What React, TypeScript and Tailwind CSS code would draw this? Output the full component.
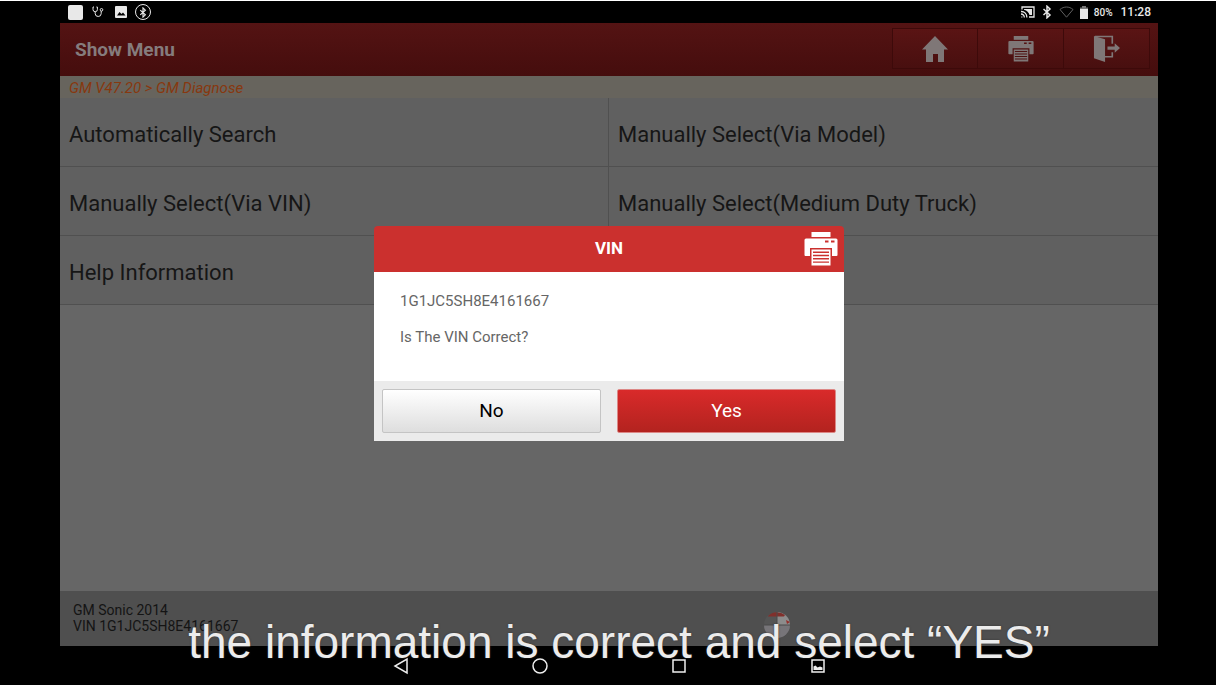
import type { ReactNode } from "react";

const MENU_ITEMS = [
  "Automatically Search",
  "Manually Select(Via Model)",
  "Manually Select(Via VIN)",
  "Manually Select(Medium Duty Truck)",
  "Help Information",
];

function PrinterIcon({ className }: { className?: string }) {
  return (
    <svg className={className} viewBox="0 0 34 34" fill="currentColor" aria-hidden="true">
      <path d="M7.5 0h19v5h-19z" />
      <path
        fillRule="evenodd"
        d="M2 6.500h30A1.500 1.500 0 0 1 33.500 8v15a1 1 0 0 1-1 1H28v-8H6v8H1.500a1 1 0 0 1-1-1V8A1.500 1.500 0 0 1 2 6.500zM21 8.500v2h3.500v-2zM27 8.500v2h3.500v-2z"
      />
      <path
        fillRule="evenodd"
        d="M7.500 17.500h19v16h-19zM9 19.500v1.400h16v-1.400zM9 22.800v1.400h16v-1.400zM9 26.100v1.400h16v-1.400zM9 29.400v1.400h16v-1.400z"
      />
    </svg>
  );
}

function HomeIcon() {
  return (
    <svg className="size-[26px]" viewBox="0 0 26 26" fill="currentColor" aria-hidden="true">
      <path d="M13 0 26 13.500h-4V26h-6v-8h-5v8H4V13.500H0z" />
    </svg>
  );
}

function ExitIcon() {
  return (
    <svg className="size-[27px]" viewBox="0 0 28 28" fill="currentColor" aria-hidden="true">
      <path d="M1 1 12.500 4.500V28L1 24z" />
      <path d="M2 1.500h18V9M12 22.500h8V18" fill="none" stroke="currentColor" strokeWidth="1.700" />
      <path d="M15 11.800h7.500V8.500l5.500 5-5.500 5v-3.300H15z" />
    </svg>
  );
}

function PictureIcon() {
  return (
    <svg className="h-3 w-3" viewBox="0 0 12 12" aria-hidden="true">
      <rect width="12" height="12" rx="1" fill="#e8e8e8" />
      <path d="M2 9.500 4.500 6l2 2L8 6.500l2.500 3z" fill="#000" />
    </svg>
  );
}

function BluetoothIcon({ className }: { className?: string }) {
  return (
    <svg className={className} viewBox="0 0 10 14" fill="none" stroke="currentColor" strokeWidth="1.500" aria-hidden="true">
      <path d="M1.500 4 8 10 5 12.800V1.200L8 4 1.500 10" />
    </svg>
  );
}

function StatusBar() {
  return (
    <div className="flex h-[22px] items-center justify-between pl-2 pr-[7px] text-[#e8e8e8]">
      <div className="flex items-center">
        <span className="size-[15px] rounded-xs bg-[#e8e8e8]" />
        <svg className="ml-[9px] h-3 w-3" viewBox="0 0 12 12" fill="none" stroke="currentColor" aria-hidden="true">
          <path d="M2 1H1v2.500a2.200 2.200 0 0 0 4.400 0V1h-1M3.200 6v1.500a3 3 0 0 0 6 0V5" />
          <circle cx="9.500" cy="3.800" r="1.300" />
        </svg>
        <span className="ml-[11px]">
          <PictureIcon />
        </span>
        <span className="ml-2 flex size-4 items-center justify-center rounded-full border border-[#e8e8e8]">
          <BluetoothIcon className="h-[11px] w-2" />
        </span>
      </div>
      <div className="flex items-center">
        <svg className="h-3 w-[14px]" viewBox="0 0 14 12" fill="none" stroke="currentColor" strokeWidth="1.300" aria-hidden="true">
          <path d="M1 3.500V1h12v10H8" />
          <path d="M3 3h8v6H8.500Q7.500 5 3 3.800z" fill="currentColor" stroke="none" />
          <path d="M0 5.500A5.500 5.500 0 0 1 5.800 11.500M0 8a3.300 3.300 0 0 1 3.300 3.500M.5 11h.8" />
        </svg>
        <BluetoothIcon className="ml-[7px] h-[14px] w-[10px]" />
        <svg className="ml-[7px] h-3 w-[15px] text-[#606060]" viewBox="0 0 15 12" fill="none" stroke="currentColor" aria-hidden="true">
          <path d="M1 3.500C4.800.2 10.200.2 14 3.500L7.500 11.200z" />
        </svg>
        <svg className="ml-[6px] h-[13px] w-[8px]" viewBox="0 0 8 13" aria-hidden="true">
          <path d="M2 0h4v1.500h2V4H0V1.500h2z" fill="#777" />
          <path d="M0 3h8v10H0z" fill="currentColor" />
        </svg>
        <span className="ml-[6px] text-[10px] font-medium">80%</span>
        <span className="ml-2 text-xs font-medium">11:28</span>
      </div>
    </div>
  );
}

function ToolbarButton({ label, children }: { label: string; children: ReactNode }) {
  return (
    <button
      type="button"
      aria-label={label}
      className="flex h-[41px] w-[86px] items-center justify-center border-y border-r border-[#3d0a0a] bg-linear-to-b from-[#5a1414] to-[#480f0f] text-[#7f7777] first:border-l"
    >
      {children}
    </button>
  );
}

function VinDialog() {
  return (
    <div
      role="dialog"
      aria-labelledby="vin-title"
      className="w-[470px] overflow-hidden rounded-t-sm bg-[#cb302e]"
    >
      <div className="relative flex h-[46px] items-center justify-center text-white">
        <h2 id="vin-title" className="text-[17px] font-bold">VIN</h2>
        <button type="button" aria-label="Print" className="absolute right-[6px] top-[6px]">
          <PrinterIcon className="size-[34px]" />
        </button>
      </div>
      <div className="space-y-3 bg-white px-[26px] pb-8 pt-[17px] text-[15px] leading-6 text-[#666]">
        <p>1G1JC5SH8E4161667</p>
        <p>Is The VIN Correct?</p>
      </div>
      <div className="flex gap-4 bg-[#ebebeb] p-2 text-[19px]">
        <button
          type="button"
          className="h-11 flex-1 rounded-xs border border-[#c4c4c4] bg-linear-to-b from-white to-[#dedede] text-black"
        >
          No
        </button>
        <button
          type="button"
          className="h-11 flex-1 rounded-xs border border-[#dc8886] bg-linear-to-b from-[#d92a2a] to-[#b3231f] text-white"
        >
          Yes
        </button>
      </div>
    </div>
  );
}

function NavBar() {
  return (
    <nav className="flex h-[39px] items-center justify-center gap-[119px] pt-px text-[#eee]">
      <button type="button" aria-label="Back">
        <svg className="size-5" viewBox="0 0 20 20" fill="none" stroke="currentColor" strokeWidth="1.500" aria-hidden="true">
          <path d="M16 3v14L4 10z" />
        </svg>
      </button>
      <button type="button" aria-label="Home">
        <svg className="size-5" viewBox="0 0 20 20" fill="none" stroke="currentColor" strokeWidth="1.500" aria-hidden="true">
          <circle cx="10" cy="10" r="7" />
        </svg>
      </button>
      <button type="button" aria-label="Recent apps">
        <svg className="size-5" viewBox="0 0 20 20" fill="none" stroke="currentColor" strokeWidth="1.500" aria-hidden="true">
          <path d="M4 4h12v12H4z" />
        </svg>
      </button>
      <button type="button" aria-label="Screenshot">
        <svg className="size-5" viewBox="0 0 20 20" fill="none" stroke="currentColor" strokeWidth="1.500" aria-hidden="true">
          <path d="M4 4h12v12H4z" />
          <path d="M5.500 14v-3.500l2-1 2 2 2.500-1 2.500 1V14z" fill="currentColor" stroke="none" />
        </svg>
      </button>
    </nav>
  );
}

export default function App() {
  return (
    <div className="relative flex min-h-screen flex-col border-t border-white bg-black pl-[60px] pr-[58px] font-[Roboto,sans-serif]">
      <StatusBar />

      <div className="relative flex flex-1 flex-col bg-[#666]">
        <header className="flex h-[53px] items-start justify-between bg-linear-to-b from-[#541313] to-[#450d0d] pr-2 pt-[5px]">
          <h1 className="pl-[15px] pt-2 text-[19px] font-bold leading-7 text-[#857c7d]">Show Menu</h1>
          <div className="flex">
            <ToolbarButton label="Home"><HomeIcon /></ToolbarButton>
            <ToolbarButton label="Print"><PrinterIcon className="size-[26px]" /></ToolbarButton>
            <ToolbarButton label="Exit"><ExitIcon /></ToolbarButton>
          </div>
        </header>

        <p className="h-[22px] bg-[#67645d] px-[9px] pt-px text-[15px] italic leading-[22px] text-[#87380f]">
          GM V47.20 &gt; GM Diagnose
        </p>

        <main className="flex-1">
          <div className="grid grid-cols-2 bg-[#606060]">
            {MENU_ITEMS.map((item) => (
              <button
                key={item}
                type="button"
                className="h-[69px] border-b border-[#505050] px-[9px] pt-1 text-left text-[22px] text-[#161616] odd:border-r last:border-r-0"
              >
                {item}
              </button>
            ))}
            <div className="border-b border-[#505050]" />
          </div>
        </main>

        <footer className="relative h-[55px] bg-[#4f4f4f] px-[13px] pt-[11px] text-sm leading-4 text-[#141414]">
          <p>GM Sonic 2014</p>
          <p>VIN 1G1JC5SH8E4161667</p>
          <svg className="absolute left-[64%] top-5 size-7" viewBox="0 0 28 28" aria-hidden="true">
            <circle cx="14" cy="14" r="13" fill="#555" />
            <path d="M14 14V1a13 13 0 0 1 13 13z" fill="#8c8c8c" />
            <path d="M1 14h26a13 13 0 0 1-26 0z" fill="#777579" />
            <path d="M5 5a13 13 0 0 1 17-1l-1 1.500H5z" fill="#80302c" />
            <path d="M14 1v26M1 14h26" stroke="#4a4a4a" />
            <path d="m23 9 4 2-3 2z" fill="#942f2c" />
          </svg>
        </footer>

        <div className="absolute inset-0 flex items-center justify-center pb-[2px]">
          <VinDialog />
        </div>
      </div>

      <NavBar />

      <p className="pointer-events-none absolute inset-x-0 bottom-[18px] pl-[22px] text-center font-['Liberation_Sans',sans-serif] text-[46px] leading-[50px] text-[#ececec] [text-shadow:0_0_2px_#333]">
        the information is correct and select “YES”
      </p>
    </div>
  );
}
